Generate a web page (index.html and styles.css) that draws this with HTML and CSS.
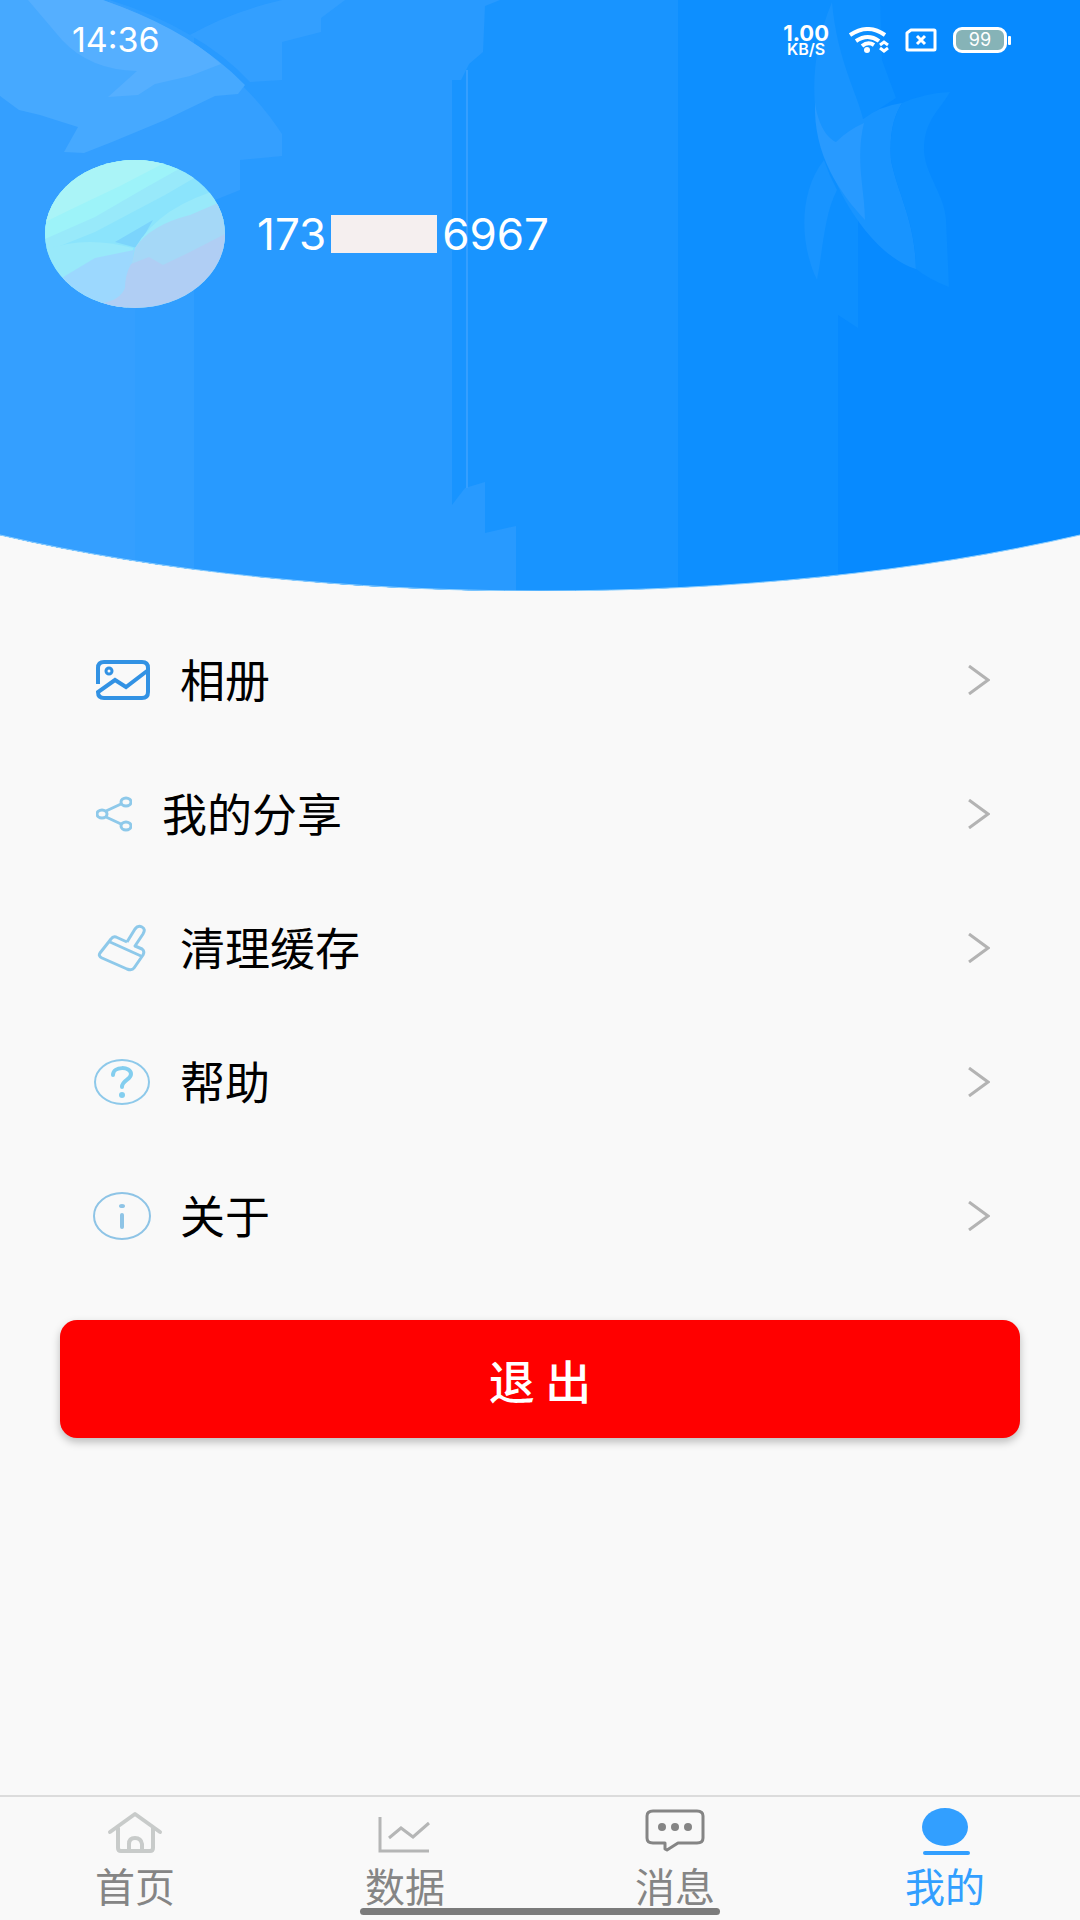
FILE: index.html
```html
<!DOCTYPE html>
<html lang="zh-CN">
<head>
<meta charset="utf-8">
<meta name="viewport" content="width=device-width, initial-scale=1">
<title>我的</title>
<link rel="stylesheet" href="styles.css">
</head>
<body>
<div class="app">
  <header class="hero">
    <svg class="hero-art" viewBox="0 0 1080 591" preserveAspectRatio="none" aria-hidden="true">
      <defs>
        <clipPath id="curve"><path d="M0 0H1080V535C920 572 730 591 540 591S160 572 0 535Z"/></clipPath>
      </defs>
      <g clip-path="url(#curve)">
        <path fill="#078aff" d="M0 0H1080V591H0Z"/>
        <path fill="#0d8fff" d="M0 0H880L882 60L896 98L862 120L858 190V328L838 315V591H0Z"/>
        <path fill="#1894ff" d="M0 0H678V591H0Z"/>
        <path fill="#289aff" d="M0 0H500L485 6L483 52L469 64L461 80H452V505L465 488L485 482V533L516 526V591H0Z"/>
        <path fill="#309eff" d="M0 0H194V591H0Z"/>
        <path fill="#349fff" d="M0 97L110 0C195 35 250 85 282 134V156L240 160V190L215 200L135 310V591H0Z"/>
        <path fill="#289aff" d="M110 0H282Q230 12 190 35Q155 14 110 0Z"/>
        <path fill="#339fff" d="M190 35Q230 12 282 0H345L321 18V32L282 42V80L250 82Q225 55 190 35Z"/>
        <path fill="#46a9ff" d="M0 0H103Q195 33 245 85L238 94L215 96L165 120L112 142L84 153L64 152L78 127L62 122L40 115L19 110L0 96Z"/>
        <path fill="#55afff" d="M28 0H103Q180 27 221 64L190 76L155 84L138 95L108 97L137 71Q90 70 62 40Z"/>
        <path fill="#359fff" d="M466 70H468V488H466Z"/>
        <path fill="#1894ff" d="M832 2C808 60 810 115 828 162C850 225 890 262 916 269C915 220 898 195 891 160C889 130 895 115 902 103Q880 106 863 119C858 95 837 60 832 2Z"/>
        <path fill="#0d8fff" d="M902 103Q925 93 950 92C940 110 924 120 924 150C925 175 945 195 946 220L949 287Q930 280 916 269C915 220 898 195 891 160C889 130 895 115 902 103Z"/>
        <path fill="#289aff" d="M815 102C817 120 825 137 836 142Q848 130 864 123C855 160 865 190 865 220C840 193 813 155 815 102Z"/>
        <path fill="#1894ff" d="M824 160C798 193 800 245 817 280C823 250 824 215 837 190Q829 175 824 160Z"/>
      </g>
      <path class="hero-edge" d="M0 535C160 572 350 591 540 591S920 572 1080 535"/>
    </svg>

    <div class="status">
      <time class="clock">14:36</time>
      <div class="indicators">
        <div class="speed"><span class="rate">1.00</span><span class="unit">KB/S</span></div>
        <svg width="40" height="26" viewBox="0 0 40 26" fill="none" stroke="#fff" stroke-width="4" aria-label="Wi-Fi">
          <path d="M1 8Q19 -4 36 8M7 14Q19 6 30 14M13 19Q19 14 25 18"/>
          <circle cx="18" cy="23" r="3" fill="#fff" stroke="none"/>
          <path stroke-width="3" d="M31 18L35 15L39 18M31 21L35 24L39 21"/>
        </svg>
        <svg width="32" height="24" viewBox="0 0 32 24" fill="none" stroke="#fff" stroke-width="3" aria-label="SIM">
          <path stroke-linejoin="round" d="M6 2H29Q30 2 30 3V21Q30 22 29 22H3Q2 22 2 21V5Z"/>
          <path d="M12 8L20 16M20 8L12 16"/>
        </svg>
        <div class="battery"><span class="level">99</span><span class="nub"></span></div>
      </div>
    </div>

    <div class="profile">
      <svg class="avatar" viewBox="0 0 180 148" aria-label="头像">
        <defs><clipPath id="face"><ellipse cx="90" cy="74" rx="90" ry="74"/></clipPath></defs>
        <g clip-path="url(#face)">
          <path fill="#8be4fc" d="M0 0H180V148H0Z"/>
          <path fill="#98e9fa" d="M0 0H180L120 35L50 72L0 92Z"/>
          <path fill="#9df3f9" d="M0 0H150L100 28L50 57L0 79Z"/>
          <path fill="#aaf4f7" d="M0 0H125L75 26L35 45L0 62Z"/>
          <path fill="#7bd4fc" d="M70 82L108 60L92 88Z"/>
          <path fill="#98e9fa" d="M0 90Q40 75 88 88L80 148H0Z"/>
          <path fill="#9cd8fe" d="M0 130L20 116L50 98L89 90L82 148H0Z"/>
          <path fill="#98e9fa" d="M90 88Q115 45 180 28V60L100 88Z"/>
          <path fill="#a5d8f7" d="M90 88Q105 65 145 55L180 40V90L120 110L86 108Z"/>
          <path fill="#b0cef4" d="M58 143Q75 140 80 128Q80 115 86 104L104 97L118 105L145 92L180 74V148H58Z"/>
        </g>
      </svg>
      <p class="phone"><span>173</span><span class="mask"></span><span>6967</span></p>
    </div>
  </header>

  <main class="content">
    <nav class="menu">
      <a class="row" href="#album">
        <svg width="54" height="40" viewBox="0 0 54 40" fill="none" stroke="#3292e4" stroke-width="4" aria-hidden="true">
          <path d="M2 24V8Q2 2 8 2H46Q52 2 52 8V32Q52 38 46 38H8Q2 38 2 32L19 20L30 27L51 11"/>
          <circle cx="13" cy="11" r="3" stroke-width="3"/>
        </svg>
        <span class="label">相册</span>
        <svg class="chevron" viewBox="0 0 22 30" aria-hidden="true"><path d="M1 1L20 15L1 29"/></svg>
      </a>
      <a class="row" href="#share">
        <svg width="36" height="36" viewBox="0 0 36 36" fill="none" stroke="#8ec9ea" stroke-width="3" aria-hidden="true">
          <ellipse cx="6" cy="18" rx="5" ry="4"/><ellipse cx="30" cy="6" rx="5" ry="4"/><ellipse cx="30" cy="30" rx="5" ry="4"/>
          <path d="M10 15L25 8M10 21L25 28"/>
        </svg>
        <span class="label">我的分享</span>
        <svg class="chevron" viewBox="0 0 22 30" aria-hidden="true"><path d="M1 1L20 15L1 29"/></svg>
      </a>
      <a class="row" href="#cache">
        <svg width="54" height="48" viewBox="0 0 54 48" fill="none" stroke="#8ec9ea" stroke-width="3" stroke-linejoin="round" aria-hidden="true">
          <path d="M31 18L39 5Q42 1 46 3Q50 5 47 10L39 22L46 25Q49 27 47 31L38 44Q36 47 31 45L6 34Q2 32 4 29L15 15Q17 12 20 13L31 18M14 18L45 32"/>
        </svg>
        <span class="label">清理缓存</span>
        <svg class="chevron" viewBox="0 0 22 30" aria-hidden="true"><path d="M1 1L20 15L1 29"/></svg>
      </a>
      <a class="row" href="#help">
        <svg class="round-icon" width="58" height="48" viewBox="0 0 58 48" fill="none" stroke="#8ec9ea" stroke-width="2" aria-hidden="true">
          <ellipse cx="29" cy="24" rx="27" ry="22"/>
          <path stroke="#83ceef" stroke-width="4" stroke-linecap="round" d="M20 17C20 8 38 8 38 16C38 22 29 22 29 29"/>
          <circle cx="29" cy="37" r="3" fill="#83ceef" stroke="none"/>
        </svg>
        <span class="label">帮助</span>
        <svg class="chevron" viewBox="0 0 22 30" aria-hidden="true"><path d="M1 1L20 15L1 29"/></svg>
      </a>
      <a class="row" href="#about">
        <svg class="round-icon" width="58" height="48" viewBox="0 0 58 48" fill="none" stroke="#8ec4e6" stroke-width="2" aria-hidden="true">
          <ellipse cx="29" cy="24" rx="28" ry="23"/>
          <path stroke-width="4" stroke-linecap="round" d="M29 23V35"/>
          <ellipse cx="29" cy="14" rx="3" ry="2" fill="#8ec4e6" stroke="none"/>
        </svg>
        <span class="label">关于</span>
        <svg class="chevron" viewBox="0 0 22 30" aria-hidden="true"><path d="M1 1L20 15L1 29"/></svg>
      </a>
    </nav>
    <button class="logout" type="button">退 出</button>
  </main>

  <nav class="tabs">
    <a class="tab" href="#home">
      <svg width="60" height="50" viewBox="0 0 60 50" fill="none" stroke="#c8cbca" stroke-width="4" stroke-linecap="round" stroke-linejoin="round" aria-hidden="true">
        <path d="M5 25L30 7L55 25M13 21V41Q13 44 16 44H45Q48 44 48 41V21M24 43V37Q24 31 30 31T37 37V43"/>
      </svg>
      <span>首页</span>
    </a>
    <a class="tab" href="#data">
      <svg width="60" height="50" viewBox="0 0 60 50" fill="none" stroke="#b5b6b6" stroke-width="3" aria-hidden="true">
        <path d="M5 10V44H54M14 31L26 21L38 30L54 16"/>
      </svg>
      <span>数据</span>
    </a>
    <a class="tab" href="#messages">
      <svg width="60" height="50" viewBox="0 0 60 50" fill="none" stroke="#858585" stroke-width="4" stroke-linejoin="round" aria-hidden="true">
        <path stroke-width="3" d="M8 4H52Q58 4 58 9V31Q58 36 52 36H33L22 43L20 42V36H8Q2 36 2 31V9Q2 4 8 4Z"/>
        <g fill="#858585" stroke="none"><circle cx="17" cy="20" r="4"/><circle cx="30" cy="20" r="4"/><circle cx="43" cy="20" r="4"/></g>
      </svg>
      <span>消息</span>
    </a>
    <a class="tab tab-active" href="#me" aria-current="page">
      <svg width="60" height="50" viewBox="0 0 60 50" fill="#329fff" aria-hidden="true">
        <ellipse cx="30" cy="20" rx="23" ry="19"/><rect x="8" y="44" width="47" height="4" rx="2"/>
      </svg>
      <span>我的</span>
    </a>
    <span class="home-bar"></span>
  </nav>
</div>
</body>
</html>
```
FILE: styles.css
```css
* {
  box-sizing: border-box;
}

body {
  margin: 0;
  background: #f9f9f9;
  color: #000;
  font-family: "Noto Sans CJK SC", sans-serif;
}

a {
  color: inherit;
  text-decoration: none;
}

.app {
  display: flex;
  flex-direction: column;
  min-height: 100vh;
}

/* Header */
.hero {
  position: relative;
  padding: 20px 69px 283px 45px;
  color: #fff;
  font-family: Inter, sans-serif;
}

.hero-art {
  position: absolute;
  inset: 0;
  width: 100%;
  height: 100%;
}

.hero-edge {
  fill: none;
  stroke: #8fd0ff;
  stroke-width: 1;
}

.status,
.profile {
  position: relative;
  display: flex;
  align-items: center;
}

.status {
  justify-content: space-between;
  height: 40px;
  padding-left: 27px;
}

.clock {
  font-size: 34px;
  line-height: 40px;
}

.indicators {
  display: flex;
  align-items: center;
  gap: 16px;
}

.speed {
  display: flex;
  flex-direction: column;
  align-items: center;
  margin-right: 4px;
}

.rate {
  font-size: 22px;
  font-weight: 700;
  line-height: 18px;
}

.unit {
  font-size: 16px;
  font-weight: 600;
  line-height: 14px;
}

.battery {
  display: flex;
  align-items: center;
  gap: 1px;
}

.level {
  width: 54px;
  height: 26px;
  border: 3px solid #fff;
  border-radius: 9px;
  background: #86b3b7;
  font-size: 18px;
  line-height: 20px;
  text-align: center;
}

.nub {
  width: 3px;
  height: 9px;
  border-radius: 1px;
  background: #fff;
}

.profile {
  gap: 32px;
  margin-top: 100px;
}

.avatar {
  width: 180px;
  height: 148px;
}

.phone {
  display: flex;
  align-items: center;
  gap: 5px;
  margin: 0;
  font-size: 44px;
  line-height: 48px;
}

.mask {
  width: 106px;
  height: 38px;
  background: #f5efef;
}

/* Menu */
.content {
  padding: 22px 60px 40px;
}

.row {
  display: flex;
  align-items: center;
  gap: 30px;
  height: 134px;
  padding: 0 30px 0 36px;
}

.round-icon {
  margin: 0 -1px 0 -3px;
}

.label {
  flex: 1;
  padding-bottom: 2px;
  font-size: 45px;
  line-height: 64px;
}

.chevron {
  width: 22px;
  height: 30px;
  fill: none;
  stroke: #b3b3b3;
  stroke-width: 3;
}

.logout {
  display: block;
  width: 100%;
  height: 118px;
  margin-top: 37px;
  border: 0;
  border-radius: 17px;
  background: #f00;
  box-shadow: 0 4px 8px rgba(0, 0, 0, 0.25);
  color: #fff;
  font: 500 46px/64px "Noto Sans CJK SC", sans-serif;
}

/* Bottom tabs */
.tabs {
  position: relative;
  display: grid;
  grid-template-columns: repeat(4, 1fr);
  height: 125px;
  margin-top: auto;
  border-top: 2px solid #dcdcdc;
}

.tab {
  display: flex;
  flex-direction: column;
  align-items: center;
  padding-top: 10px;
  color: #858585;
  font-size: 40px;
  line-height: 56px;
}

.tab-active {
  color: #329fff;
}

.home-bar {
  position: absolute;
  bottom: 5px;
  left: 50%;
  width: 360px;
  height: 7px;
  margin-left: -180px;
  border-radius: 4px;
  background: #7b7b7b;
}
```
